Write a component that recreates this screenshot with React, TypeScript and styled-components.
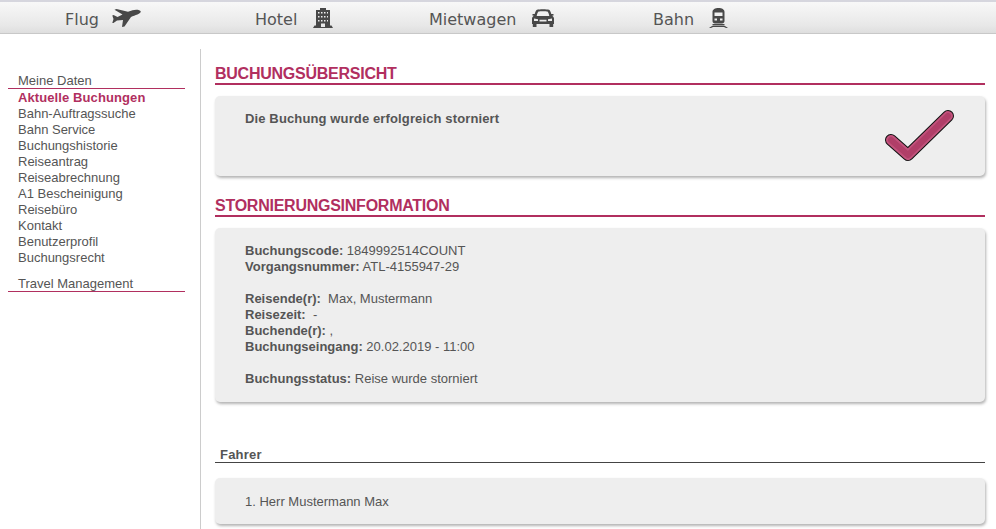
import React from "react";
import styled, { createGlobalStyle } from "styled-components";

const GlobalStyle = createGlobalStyle`
  html, body {
    margin: 0;
    padding: 0;
    background: #fff;
    overflow: hidden;
  }
  body {
    font-family: "Liberation Sans", Arial, sans-serif;
    font-size: 13px;
    color: #555;
  }
`;

const Page = styled.div`
  width: 996px;
  height: 529px;
  overflow: hidden;
`;

const TopBar = styled.nav`
  height: 31px;
  border-top: 2px solid #d6d6de;
  border-bottom: 1px solid #c8c8c8;
  background: linear-gradient(#f8f8f8, #e8e8e8 75%, #dedede);
  display: flex;
  align-items: center;
  padding-left: 65px;
`;

const NavItem = styled.a<{ $width: number }>`
  width: ${(p) => p.$width}px;
  display: flex;
  align-items: center;
  font-family: "DejaVu Sans", Verdana, sans-serif;
  font-size: 16px;
  color: #555;
`;

const NavLabel = styled.span`
  padding-top: 4px;
`;

const NavIcon = styled.svg<{ $gap: number }>`
  margin-left: ${(p) => p.$gap}px;
  fill: #484848;
  display: block;
`;

const Body = styled.div`
  display: flex;
  padding-top: 15px;
`;

const Sidebar = styled.aside`
  width: 201px;
  height: 480px;
  box-sizing: border-box;
  border-right: 1px solid #ccc;
  padding: 24px 15px 0 8px;
`;

const MenuHead = styled.div`
  padding-left: 10px;
  line-height: 16px;
  height: 15px;
  border-bottom: 1px solid #b12f5f;
  color: #555;
`;

const MenuList = styled.ul`
  list-style: none;
  margin: 0 0 10px;
  padding: 1px 0 0 10px;
`;

const MenuItem = styled.li<{ $active?: boolean }>`
  line-height: 16px;
  height: 16px;
  color: ${(p) => (p.$active ? "#b12f5f" : "#555")};
  font-weight: ${(p) => (p.$active ? 700 : 400)};
  letter-spacing: ${(p) => (p.$active ? "0.1px" : "0")};
`;

const Main = styled.main`
  width: 770px;
  margin-left: 14px;
  padding-top: 15px;
`;

const SectionTitle = styled.h2`
  margin: 0 0 11px;
  height: 19px;
  line-height: 20px;
  border-bottom: 2px solid #b12f5f;
  color: #b12f5f;
  font-size: 16px;
  font-weight: 700;
  letter-spacing: -0.25px;
`;

const Panel = styled.section<{ $height: number; $mb: number; $pt?: number }>`
  height: ${(p) => p.$height}px;
  margin-bottom: ${(p) => p.$mb}px;
  box-sizing: border-box;
  position: relative;
  background: #eee;
  border-radius: 5px;
  box-shadow: 1px 2px 3px rgba(0, 0, 0, 0.3);
  padding: ${(p) => p.$pt ?? 15}px 30px 0;
  line-height: 16px;
`;

const Line = styled.div`
  min-height: 16px;
  white-space: pre;
`;

const Strong = styled.b`
  font-weight: 700;
`;

const Notice = styled.b`
  font-weight: 700;
  letter-spacing: 0.13px;
`;

const Tick = styled.svg`
  position: absolute;
  right: 30px;
  top: 14px;
`;

const SubTitle = styled.h3`
  margin: 0 0 15px;
  padding-left: 5px;
  height: 16px;
  line-height: 18px;
  font-size: 13px;
  font-weight: 700;
  color: #555;
  border-bottom: 1px solid #444;
  letter-spacing: 0.2px;
`;

const menu = [
  "Bahn-Auftragssuche",
  "Bahn Service",
  "Buchungshistorie",
  "Reiseantrag",
  "Reiseabrechnung",
  "A1 Bescheinigung",
  "Reisebüro",
  "Kontakt",
  "Benutzerprofil",
  "Buchungsrecht",
];

const tickPath = "M6 30 L23 45 L63 6";

const App: React.FC = () => (
  <Page>
    <GlobalStyle />
    <TopBar>
      <NavItem $width={190}>
        <NavLabel>Flug</NavLabel>
        <NavIcon $gap={13} width="29" height="18" viewBox="0 0 29 18">
          <path d="M28.800 2.600C28 .6 24 .2 20.500 1.200L16 2.800 4.500 0 2.500.8l8 4.700L5.500 8l-4-2-1.200.5L1.500 10 .3 14h1.200L5 11.500 11 11l-1 7 2.500-.5L19 8c4-1.500 10-3.200 9.800-5.400z" />
        </NavIcon>
      </NavItem>
      <NavItem $width={174}>
        <NavLabel>Hotel</NavLabel>
        <NavIcon $gap={16} width="20" height="20" viewBox="0 0 20 20">
          <path fillRule="evenodd" d="M3 2h4V0h6v2h4v15.500h1.500L20 20H0l1.500-2.500H3V2zM5 4v1.500h1.500V4H5zm3 0v1.500h1.500V4H8zm3 0v1.500h1.500V4H11zm3 0v1.500h1V4h-1zM5 8v1.500h1.500V8H5zm3 0v1.500h1.500V8H8zm3 0v1.500h1.500V8H11zm3 0v1.500h1V8h-1zM5 12v1.500h1.500V12H5zm3 0v1.500h1.500V12H8zm3 0v1.500h1.500V12H11zm3 0v1.500h1V12h-1zM8 15.500V19h4v-3.500H8z" />
        </NavIcon>
      </NavItem>
      <NavItem $width={224}>
        <NavLabel>Mietwagen</NavLabel>
        <NavIcon $gap={16} width="22" height="18" viewBox="0 0 22 18">
          <path fillRule="evenodd" d="M5 .8C7 0 15 0 17 .8c1 .4 1.700 2.200 2.300 4.200H21.500v1.500l-1.500.3c1.200.8 2 1.700 2 2.700V15h-.8v3h-3.700v-3h-13v3H.8v-3H0V9.500c0-1 .8-1.900 2-2.700L.5 6.500V5h2.200C3.300 3 4 1.200 5 .8zM4.700 7h12.600c-.4-1.700-1-3.900-1.800-4.400-1.200-.4-7.800-.4-9 0C5.700 3.100 5.100 5.300 4.700 7zM2 9.500V12h4v-1.800L2 9.500zm18 0l-4 .7V12h4V9.500zM7.500 10.800V12.500h7v-1.700h-7z" />
        </NavIcon>
      </NavItem>
      <NavItem $width={100}>
        <NavLabel>Bahn</NavLabel>
        <NavIcon $gap={15} width="19" height="20" viewBox="0 0 19 20">
          <path fillRule="evenodd" d="M3.500 4c0-2.500 2.500-4 6-4s6 1.500 6 4v9c0 1.500-1 2.500-2.500 2.500H6c-1.500 0-2.500-1-2.500-2.500V4zM5.500 4.500V8h8V4.500h-8zM5.500 10.500V12.500h2.500v-2H5.500zm5.500 0v2h2.500v-2H11zM3.500 16h12v1.500h-12V16zM3 18h13l3 2h-2l-2-1H4l-2 1H0l3-2z" />
        </NavIcon>
      </NavItem>
    </TopBar>
    <Body>
      <Sidebar>
        <MenuHead>Meine Daten</MenuHead>
        <MenuList>
          <MenuItem $active>Aktuelle Buchungen</MenuItem>
          {menu.map((m) => (
            <MenuItem key={m}>{m}</MenuItem>
          ))}
        </MenuList>
        <MenuHead>Travel Management</MenuHead>
      </Sidebar>
      <Main>
        <SectionTitle>BUCHUNGSÜBERSICHT</SectionTitle>
        <Panel $height={80} $mb={20}>
          <Notice>Die Buchung wurde erfolgreich storniert</Notice>
          <Tick width="70" height="52" viewBox="0 0 70 52">
            <path d={tickPath} fill="none" stroke="#111" strokeWidth="12" strokeLinecap="round" strokeLinejoin="round" />
            <path d={tickPath} fill="none" stroke="#c2527c" strokeWidth="10" strokeLinecap="round" strokeLinejoin="round" />
            <path d={tickPath} fill="none" stroke="#b03e68" strokeWidth="6" strokeLinecap="round" strokeLinejoin="round" />
          </Tick>
        </Panel>
        <SectionTitle>STORNIERUNGSINFORMATION</SectionTitle>
        <Panel $height={174} $mb={44}>
          <Line><Strong>Buchungscode:</Strong> 1849992514COUNT</Line>
          <Line><Strong>Vorgangsnummer:</Strong> ATL-4155947-29</Line>
          <Line />
          <Line><Strong>Reisende(r):</Strong>  Max, Mustermann</Line>
          <Line><Strong>Reisezeit:</Strong>  -</Line>
          <Line><Strong>Buchende(r):</Strong> ,</Line>
          <Line><Strong>Buchungseingang:</Strong> 20.02.2019 - 11:00</Line>
          <Line />
          <Line><Strong>Buchungsstatus:</Strong> Reise wurde storniert</Line>
        </Panel>
        <SubTitle>Fahrer</SubTitle>
        <Panel $height={46} $mb={0} $pt={16}>
          <Line>1. Herr Mustermann Max</Line>
        </Panel>
      </Main>
    </Body>
  </Page>
);

export default App;
